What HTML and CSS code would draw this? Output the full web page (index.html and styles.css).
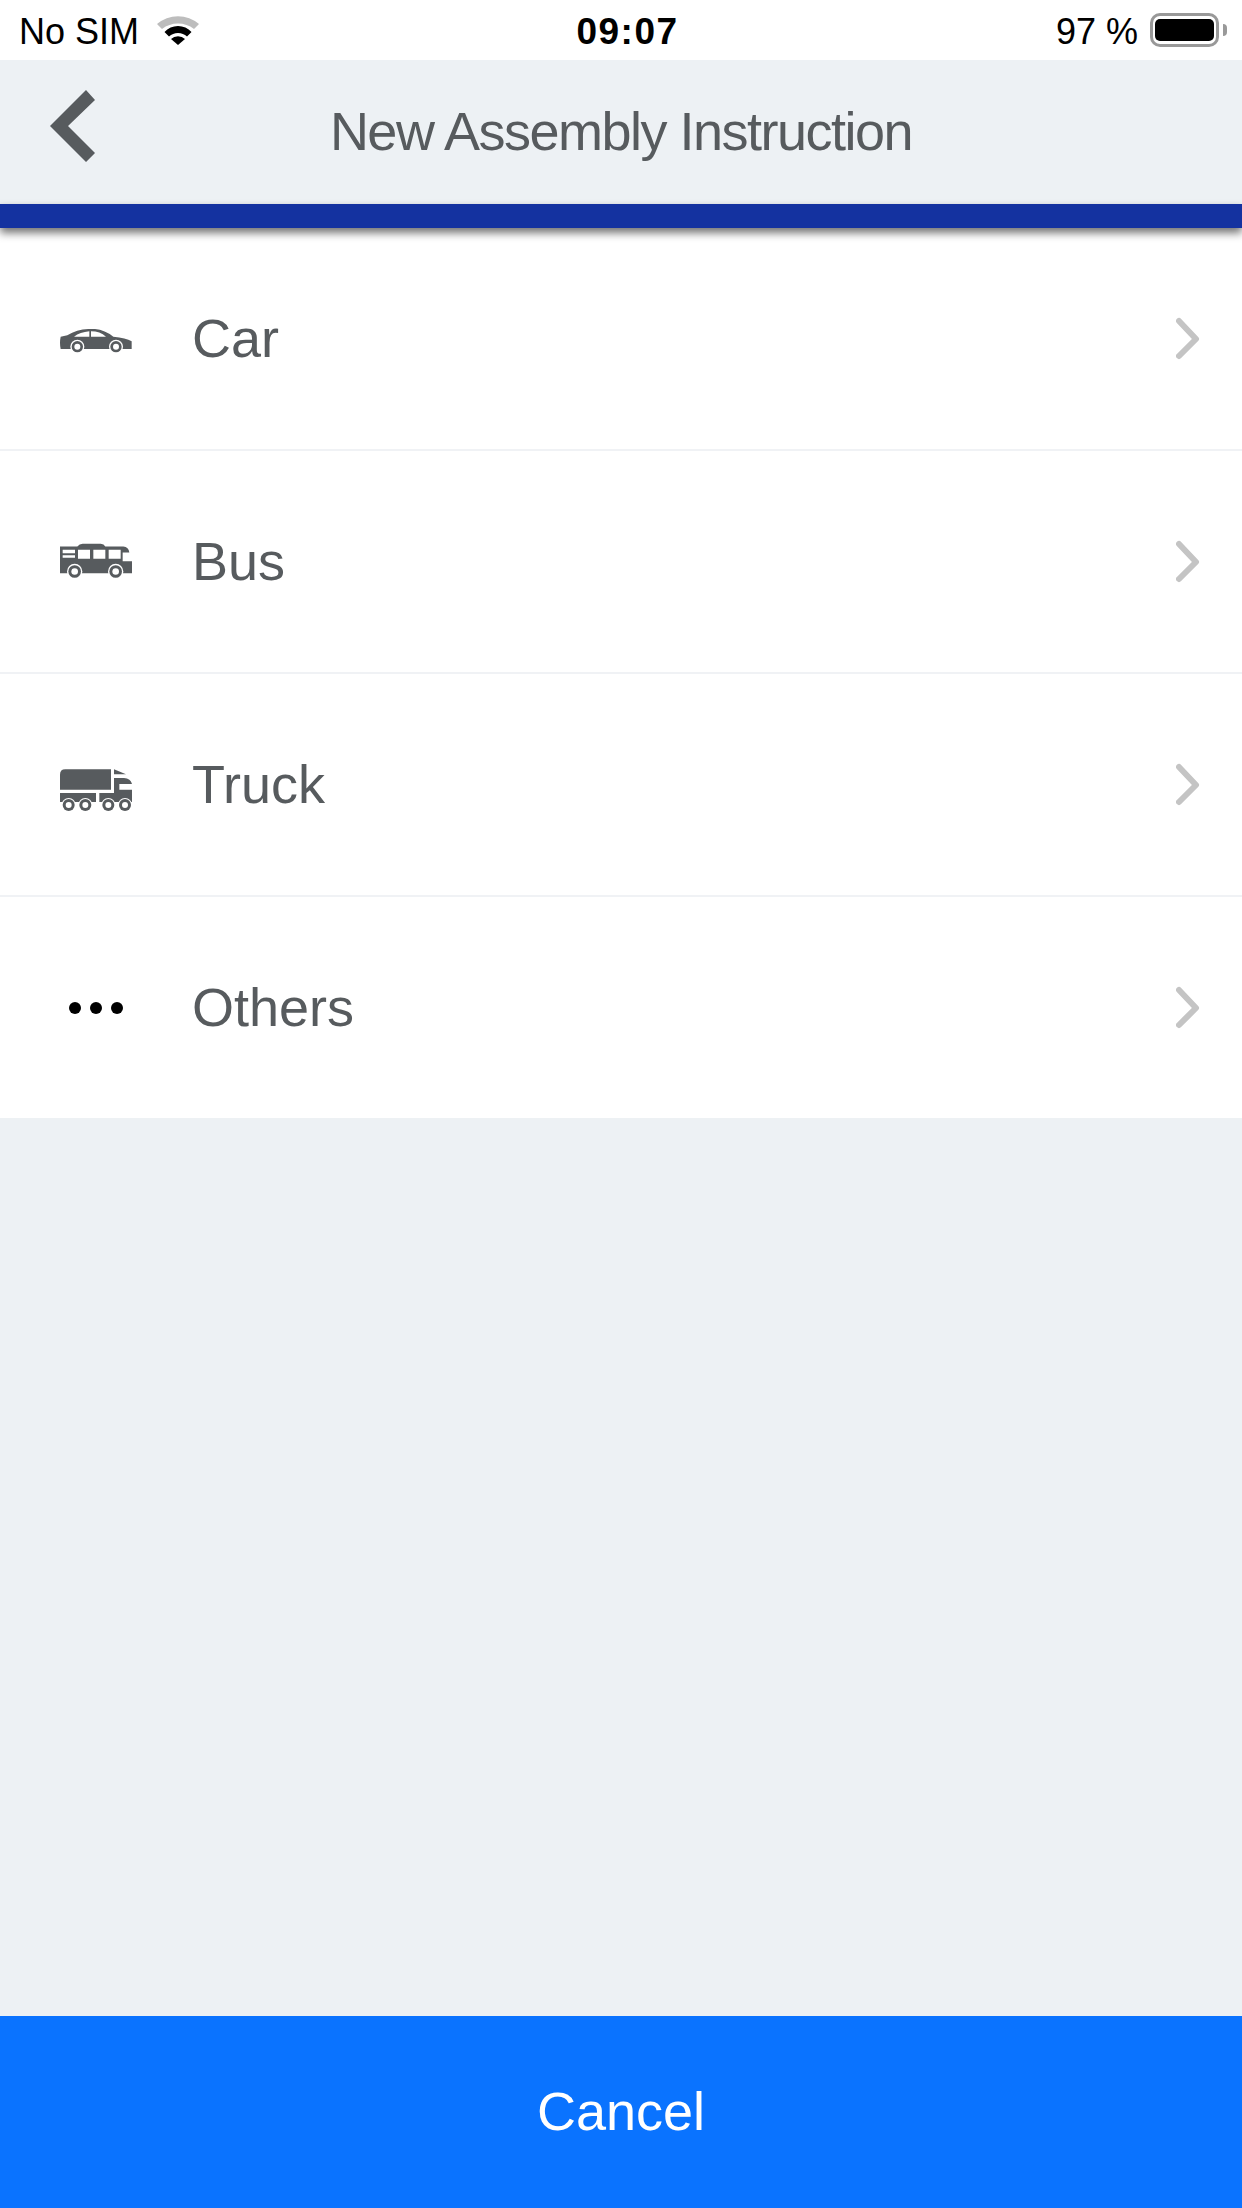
FILE: index.html
```html
<!DOCTYPE html>
<html lang="en">
<head>
    <meta charset="UTF-8">
    <meta name="viewport" content="width=device-width, initial-scale=1.0">
    <title>New Assembly Instruction</title>
    <link rel="stylesheet" href="styles.css">
</head>
<body>
    <div class="status-bar">
        <div class="status-left">
            <span class="status-text">No SIM</span>
            <svg class="wifi" viewBox="0 0 42 30">
                <path d="M0 9 A32 32 0 0 1 42 9 L37 14 A26 26 0 0 0 5 14 Z" fill="#bdbdbd"/>
                <path d="M7.500 17 A18 18 0 0 1 34.500 17 L30 21.500 A13 13 0 0 0 12 21.500 Z" fill="#000"/>
                <path d="M14 24 A10 10 0 0 1 28 24 L21 30 Z" fill="#000"/>
            </svg>
        </div>
        <div class="status-time status-text">09:07</div>
        <div class="status-right">
            <span class="status-text">97 %</span>
            <div class="battery"><div class="battery-level"></div></div>
            <div class="battery-nub"></div>
        </div>
    </div>

    <header class="nav">
        <a class="back">
            <svg viewBox="0 0 45 72" width="45" height="72">
                <polygon points="36,0 45,10 18,36 45,63 36,72 0,36" fill="#575b5e"/>
            </svg>
        </a>
        <h1 class="nav-title">New Assembly Instruction</h1>
    </header>
    <div class="nav-stripe"></div>

    <main class="content">
        <ul class="menu">
            <li class="menu-item">
                <svg class="menu-icon" viewBox="60 9 216 216">
                    <path d="M62 110 L82 106 Q110 88 145 87 H165 Q195 90 220 110 Q258 113 275 124 V147 H62 Q58 128 62 110 Z" fill="#575b5e"/>
                    <path d="M102 110 Q120 97 148 94 V110 Z M153 94 Q180 94 198 110 H153 Z" fill="#fff"/>
                    <circle cx="112" cy="140" r="21" fill="#fff"/>
                    <circle cx="112" cy="140" r="17" fill="#575b5e"/>
                    <circle cx="112" cy="140" r="9" fill="#fff"/>
                    <circle cx="228" cy="140" r="21" fill="#fff"/>
                    <circle cx="228" cy="140" r="17" fill="#575b5e"/>
                    <circle cx="228" cy="140" r="9" fill="#fff"/>
                </svg>
                <span class="menu-label">Car</span>
                <svg class="menu-arrow" viewBox="0 0 24 44">
                    <polyline points="3,4 20,22 3,39" fill="none" stroke="#c4c4c4" stroke-width="6" stroke-linecap="round" stroke-linejoin="round"/>
                </svg>
            </li>
            <li class="menu-item">
                <svg class="menu-icon" viewBox="60 16.500 216 216">
                    <path d="M60 78 H112 Q118 70 128 70 H182 Q192 70 196 78 H250 Q266 80 268 96 H248 V122 H276 V158 H60 Z" fill="#575b5e"/>
                    <path d="M68 88 H105 V98 H68 Z M68 104 H105 V112 H68 Z M114 88 H150 V115 H114 Z M160 88 H196 V115 H160 Z M206 88 H242 V115 H206 Z" fill="#fff"/>
                    <circle cx="104" cy="153" r="23" fill="#fff"/>
                    <circle cx="104" cy="153" r="19" fill="#575b5e"/>
                    <circle cx="104" cy="153" r="10" fill="#fff"/>
                    <circle cx="227" cy="153" r="23" fill="#fff"/>
                    <circle cx="227" cy="153" r="19" fill="#575b5e"/>
                    <circle cx="227" cy="153" r="10" fill="#fff"/>
                </svg>
                <span class="menu-label">Bus</span>
                <svg class="menu-arrow" viewBox="0 0 24 44">
                    <polyline points="3,4 20,22 3,39" fill="none" stroke="#c4c4c4" stroke-width="6" stroke-linecap="round" stroke-linejoin="round"/>
                </svg>
            </li>
            <li class="menu-item">
                <svg class="menu-icon" viewBox="60 9 216 216">
                    <path d="M60 86 Q60 70 76 70 H213 V131 H60 Z M222 70 L258 85 H222 Z M60 141 H168 V168 H60 Z" fill="#575b5e"/>
                    <path d="M222 96 H252 Q272 98 276 114 H238 V131 H276 V168 H178 V141 H222 Z" fill="#575b5e"/>
                    <circle cx="86" cy="177" r="21" fill="#fff"/>
                    <circle cx="86" cy="177" r="18" fill="#575b5e"/>
                    <circle cx="86" cy="177" r="9" fill="#fff"/>
                    <circle cx="136" cy="177" r="21" fill="#fff"/>
                    <circle cx="136" cy="177" r="18" fill="#575b5e"/>
                    <circle cx="136" cy="177" r="9" fill="#fff"/>
                    <circle cx="205" cy="177" r="21" fill="#fff"/>
                    <circle cx="205" cy="177" r="18" fill="#575b5e"/>
                    <circle cx="205" cy="177" r="9" fill="#fff"/>
                    <circle cx="255" cy="177" r="21" fill="#fff"/>
                    <circle cx="255" cy="177" r="18" fill="#575b5e"/>
                    <circle cx="255" cy="177" r="9" fill="#fff"/>
                </svg>
                <span class="menu-label">Truck</span>
                <svg class="menu-arrow" viewBox="0 0 24 44">
                    <polyline points="3,4 20,22 3,39" fill="none" stroke="#c4c4c4" stroke-width="6" stroke-linecap="round" stroke-linejoin="round"/>
                </svg>
            </li>
            <li class="menu-item">
                <svg class="menu-icon" viewBox="0 0 72 72">
                    <circle cx="15" cy="36" r="6" fill="#000"/>
                    <circle cx="36" cy="36" r="6" fill="#000"/>
                    <circle cx="57" cy="36" r="6" fill="#000"/>
                </svg>
                <span class="menu-label">Others</span>
                <svg class="menu-arrow" viewBox="0 0 24 44">
                    <polyline points="3,4 20,22 3,39" fill="none" stroke="#c4c4c4" stroke-width="6" stroke-linecap="round" stroke-linejoin="round"/>
                </svg>
            </li>
        </ul>
    </main>

    <button class="cancel">Cancel</button>
</body>
</html>
```

FILE: styles.css
```css
* {
    box-sizing: border-box;
}

body {
    font-family: 'Liberation Sans', Arial, sans-serif;
    background-color: #edf1f4;
    margin: 0;
    padding: 0;
    display: flex;
    flex-direction: column;
    height: 2208px;
    color: #575b5e;
}

.status-bar {
    display: flex;
    align-items: center;
    height: 60px;
    flex: none;
    padding: 0 15px 0 19px;
    background-color: #fff;
    color: #000;
    font-size: 36px;
}

.status-text {
    padding-top: 3px;
}

.status-left {
    flex: 1;
    display: flex;
    align-items: center;
    gap: 18px;
}

.wifi {
    width: 42px;
    height: 30px;
}

.status-time {
    font-weight: bold;
    font-size: 37px;
    letter-spacing: 1.500px;
    margin-left: 9px;
}

.status-right {
    flex: 1;
    display: flex;
    align-items: center;
    justify-content: flex-end;
}

.battery {
    width: 69px;
    height: 34px;
    margin-left: 12px;
    padding: 3px 2px;
    border: 3px solid #999;
    border-radius: 10px;
}

.battery-level {
    height: 100%;
    background-color: #000;
    border-radius: 5px;
}

.battery-nub {
    width: 4px;
    height: 12px;
    margin-left: 4px;
    background-color: #999;
    border-radius: 0 4px 4px 0;
}

.nav {
    display: flex;
    align-items: center;
    position: relative;
    justify-content: center;
    height: 144px;
    flex: none;
    background-color: #edf1f4;
}

.back {
    position: absolute;
    left: 50px;
    top: 30px;
    height: 72px;
}

.nav-title {
    margin: 0 0 2px;
    font-size: 54px;
    font-weight: normal;
    letter-spacing: -1.500px;
}

.nav-stripe {
    height: 24px;
    flex: none;
    background-color: #1432a0;
    box-shadow: 0 5px 8px rgba(0, 0, 0, 0.55);
    position: relative;
}

.content {
    flex: 1;
}

.menu {
    list-style: none;
    margin: 0;
    padding: 0;
    background-color: #fff;
}

.menu-item {
    display: flex;
    align-items: center;
    height: 223px;
    padding: 0 42px 0 60px;
    border-bottom: 2px solid #f0f2f5;
}

.menu-item:last-child {
    height: 221px;
    border-bottom: none;
}

.menu-icon {
    width: 72px;
    height: 72px;
    flex: none;
}

.menu-label {
    flex: 1;
    margin: 0 0 2px 60px;
    font-size: 54px;
}

.menu-arrow {
    width: 24px;
    height: 44px;
    flex: none;
}

.cancel {
    display: block;
    width: 100%;
    height: 192px;
    flex: none;
    padding-bottom: 3px;
    border: none;
    background-color: #0a73ff;
    color: #fff;
    font-family: inherit;
    font-size: 54px;
}
```
